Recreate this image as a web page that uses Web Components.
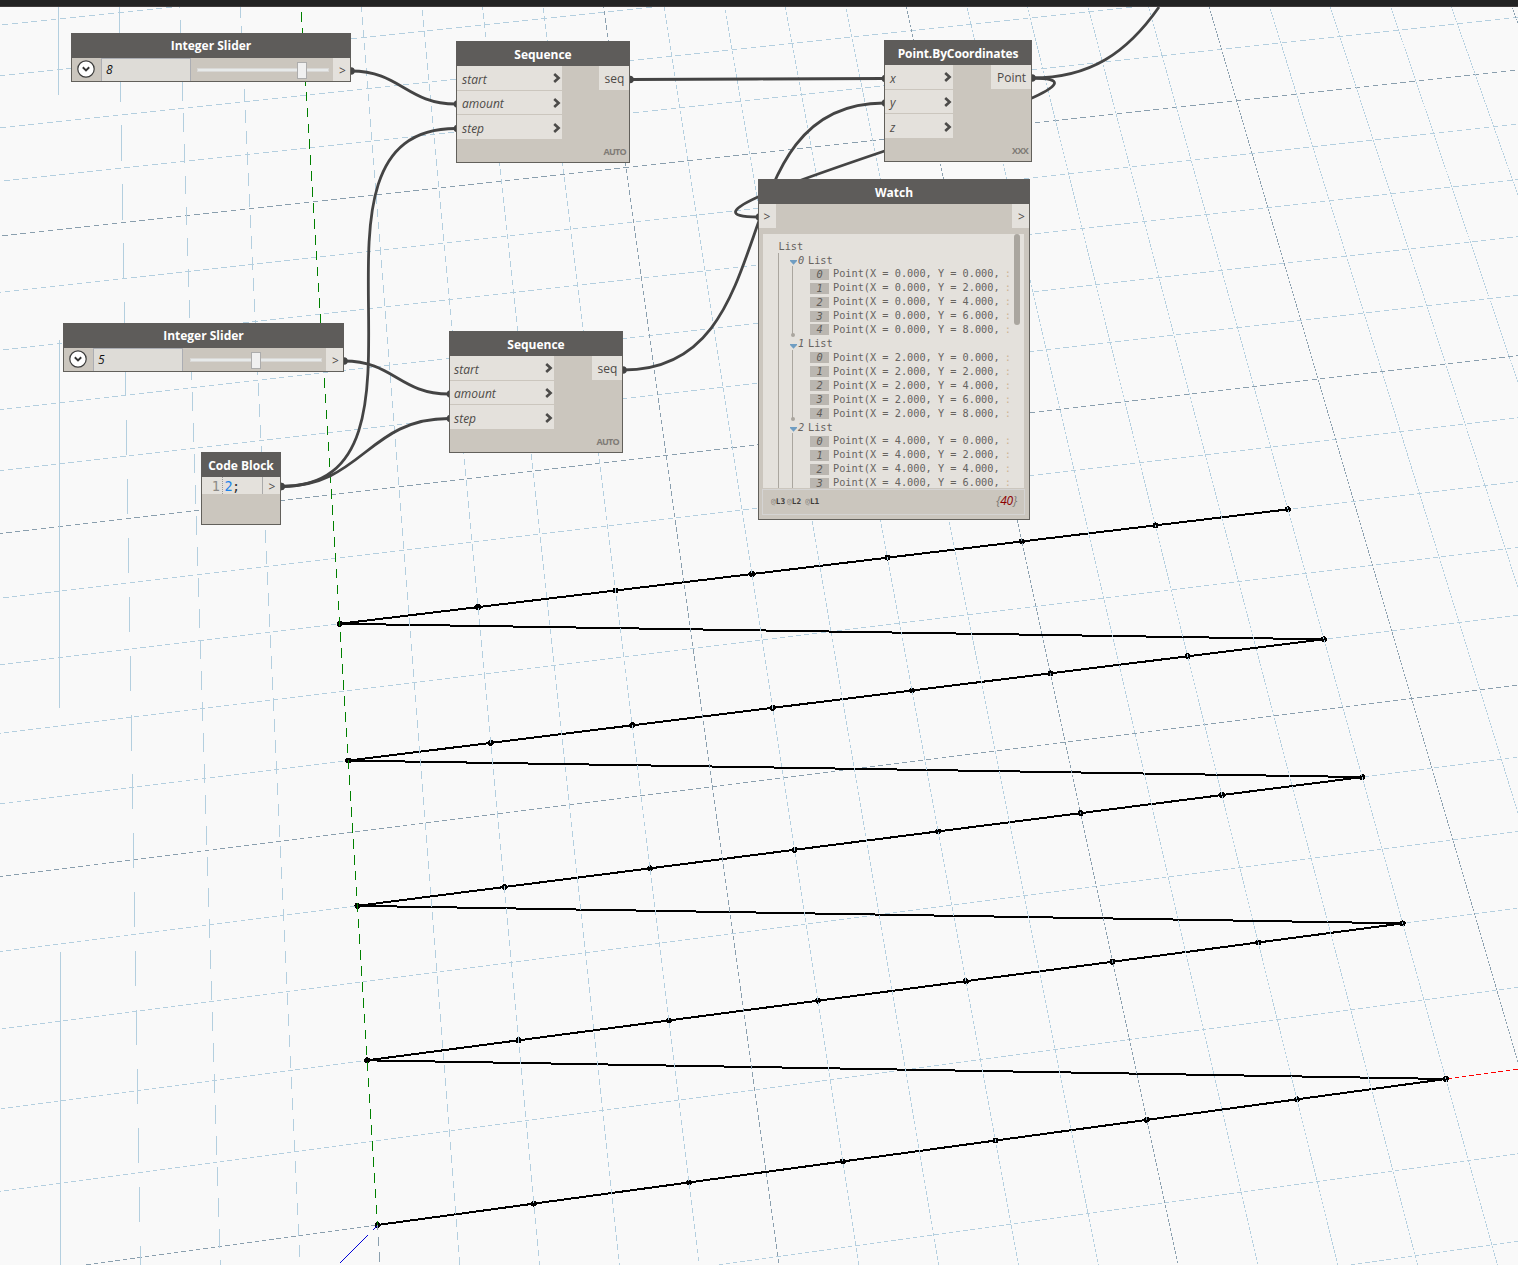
<!DOCTYPE html>
<html lang="en">
<head>
<meta charset="utf-8">
<title>Graph workspace</title>
<style>
html,body{margin:0;padding:0}
body{width:1518px;height:1265px;overflow:hidden;background:#f9f9f9;font-family:"Open Sans","Noto Sans",sans-serif;color:#4d4a47}
</style>
</head>
<body>
<graph-workspace>
  <graph-node heading="Integer Slider" style="left:71px;top:33px;width:280px;height:49px;--drop:0px">
    <int-slider value="8" style="--gap:6px;--pos:100px"></int-slider>
  </graph-node>
  <graph-node heading="Integer Slider" style="left:63px;top:323px;width:281px;height:49px;--drop:0px">
    <int-slider value="5" style="--gap:7px;--pos:61px"></int-slider>
  </graph-node>
  <graph-node heading="Sequence" tag="AUTO" style="left:456px;top:41px;width:174px;height:122px">
    <port-table inputs="start,amount,step" output="seq" style="--in:105px;--out:30px;--pad:5px"></port-table>
  </graph-node>
  <graph-node heading="Sequence" tag="AUTO" style="left:449px;top:331px;width:174px;height:122px">
    <port-table inputs="start,amount,step" output="seq" style="--in:104px;--out:30px;--pad:4px"></port-table>
  </graph-node>
  <graph-node heading="Point.ByCoordinates" tag="XXX" style="left:884px;top:40px;width:148px;height:122px;--track:-.1px">
    <port-table inputs="x,y,z" output="Point" style="--in:68px;--out:40px;--pad:5px"></port-table>
  </graph-node>
  <graph-node heading="Code Block" style="left:201px;top:452px;width:80px;height:73px">
    <code-line></code-line>
  </graph-node>
  <graph-node heading="Watch" style="left:758px;top:179px;width:272px;height:341px">
    <watch-panel></watch-panel>
  </graph-node>
</graph-workspace>

<script>
const define = (name, render) => customElements.define(name, class extends HTMLElement {
  connectedCallback() {
    if (!this.shadowRoot) this.attachShadow({ mode: 'open' }).innerHTML = render(this);
  }
});

/* Ground-plane projection: level horizon at y = -3947, columns meet at x = 52.19. */
const project = (X, Y) => {
  const w = 1 + 0.002075 * X + 0.016442 * Y;
  return [52.19 + (325.29 + 79.206 * X) / w, -3947 + 5172 / w];
};
/* A line drawn as a thin quad, so that it breaks into dashes when rasterised without smoothing. */
const bar = (a, b, width, fill) => {
  const dx = b[0] - a[0], dy = b[1] - a[1], l = Math.hypot(dx, dy);
  const nx = -dy / l * width / 2, ny = dx / l * width / 2;
  const p = [[a[0] + nx, a[1] + ny], [b[0] + nx, b[1] + ny], [b[0] - nx, b[1] - ny], [a[0] - nx, a[1] - ny]];
  return `<polygon fill="${fill}" points="${p.map(q => q.map(n => n.toFixed(3)).join()).join(' ')}"/>`;
};
const MINOR = '#b4cfdf', MAJOR = '#8a9fae';

define('ground-view', () => {
  let rows = '', cols = '', shape = '', dots = '';
  const T = 0.602;
  for (let y = -2; y <= 24; y++) {
    const c = y % 5 ? MINOR : MAJOR;
    if (y === 0) {
      rows += bar(project(-8, 0), project(0, 0), T, c) + bar(project(14, 0), project(20, 0), T, '#f00');
    } else rows += bar(project(-8, y), project(26, y), T, c);
  }
  for (let x = -5; x <= 24; x++) {
    const c = x % 5 ? MINOR : MAJOR;
    cols += bar(project(x, -3), project(x, x === 0 ? 0 : 26), T, c);
  }
  cols += bar(project(0, 0), project(0, 22.45), T, '#008000');
  let prev = null;
  for (let y = 0; y <= 8; y += 2) for (let x = 0; x <= 14; x += 2) {
    const p = project(x, y);
    if (prev) shape += bar(prev, p, 2, '#000');
    dots += `<circle cx="${p[0].toFixed(2)}" cy="${p[1].toFixed(2)}" r="2.95"/>`;
    prev = p;
  }
  const z = bar([339.5, 1263.5], [368, 1235.2], .9, '#0000d8') + bar([373, 1229.8], [377.5, 1225.5], .9, '#0000d8');
  return `<style>:host{display:block;width:100%;height:100%}svg{display:block}</style>
  <svg width="1518" height="1265" viewBox="0 0 1518 1265" shape-rendering="crispEdges">${rows}${shape}${dots}${cols}${z}</svg>`;
});

define('wire-layer', () => {
  const wires = [[351,71,456,104],[281,486.5,456,128.5],[344,361,449,394],[281,486.5,449,418.5],
    [630,79.5,884,78.5],[623,370,884,103],[1032,78,758,217]];
  let s = '';
  for (const [a, b, c, d] of wires) {
    const o = 0.45 * Math.hypot(c - a, d - b);
    s += `<path d="M${a} ${b}C${a + o} ${b} ${c - o} ${d} ${c} ${d}"/><circle cx="${a}" cy="${b}" r="3.8"/><circle cx="${c + 1.5}" cy="${d}" r="3.8"/>`;
  }
  s += '<path d="M1032 78C1090 78 1127 53 1159 7"/>';
  return `<style>:host{display:block;width:100%;height:100%}svg{display:block}path{fill:none;stroke:#444;stroke-width:2.8}circle{fill:#444}</style>
  <svg width="1518" height="1265" viewBox="0 0 1518 1265">${s}</svg>`;
});

define('graph-workspace', () => `<style>
  :host{display:block;position:relative;width:1518px;height:1265px;overflow:hidden;background:#f9f9f9}
  ground-view,wire-layer{position:absolute;left:0;top:0}
  .bar{position:relative;height:6px;background:#232323;border-bottom:1px solid #3f3b3b}
</style><ground-view></ground-view><wire-layer></wire-layer><div class="bar"></div><slot></slot>`);

define('graph-node', el => `<style>
  :host{display:flex;flex-direction:column;position:absolute;box-sizing:border-box;border:1px solid #62605b;border-top:0;background:#cbc6be}
  header{flex:none;box-sizing:border-box;height:25px;margin:0 -1px;padding-top:var(--drop,1px);background:#5e5c5a;color:#fff;font-weight:700;font-size:12px;line-height:25px;letter-spacing:var(--track,0px);text-align:center;white-space:nowrap}
  .body{flex:1;min-height:0;display:flex;flex-direction:column}
  footer{flex:none;height:21px;line-height:21px;padding-right:3px;text-align:right;font-size:9px;font-weight:700;letter-spacing:-.7px;color:#7f7b76}
</style><header>${el.getAttribute('heading')}</header><div class="body"><slot></slot></div>${el.hasAttribute('tag') ? `<footer>${el.getAttribute('tag')}</footer>` : ''}`);

define('int-slider', el => `<style>
  :host{display:flex;height:23px;align-items:stretch}
  .lead{flex:none;box-sizing:border-box;width:29px;padding-right:1px;display:flex;justify-content:center;align-items:center}
  .lead svg{display:block;margin-top:-1px}
  .box{flex:none;box-sizing:border-box;width:90px;border:1px solid #abadb3;border-bottom:0;background:#dedcd7;color:#111;font:italic 12px/22px "Open Sans",sans-serif;padding-left:4px}
  .rail{flex:none;width:132px;margin-left:var(--gap);display:flex;align-items:center;height:24px}
  .track{box-sizing:border-box;width:100%;height:4px;background:#e7eaea;border:1px solid #d9d8d6;display:flex;align-items:center}
  .thumb{flex:none;box-sizing:border-box;width:10px;height:17px;margin-left:calc(var(--pos) - 1px);background:#f0f0f0;border:1px solid #acacac}
  .out{flex:none;box-sizing:border-box;width:17px;padding-left:2px;margin-left:auto;background:#e4e1dc;font-size:12px;line-height:26px;text-align:center}
</style>
<div class="lead"><svg width="18" height="18" viewBox="0 0 18 18"><circle cx="9" cy="9" r="8.2" fill="#fff" stroke="#3c3c3c" stroke-width="1.2"/><path d="M5.8 7.3L9 10.4L12.2 7.3" fill="none" stroke="#333" stroke-width="1.9"/></svg></div>
<div class="box">${el.getAttribute('value')}</div>
<div class="rail"><div class="track"><div class="thumb"></div></div></div>
<div class="out">&gt;</div>`);

define('port-table', el => `<style>
  :host{display:flex;justify-content:space-between;align-items:flex-start;font-size:12px;line-height:25px}
  .ins{width:var(--in);display:flex;flex-direction:column;gap:1px}
  .in{display:flex;justify-content:space-between;align-items:center;height:23.67px;padding:1px 1px 0 var(--pad);box-sizing:border-box;background:#e4e1dc;font-style:italic}
  .in span{margin-top:1px}
  .in:first-child span{margin-top:2px}
  .out{box-sizing:border-box;width:var(--out);height:24px;padding-left:1px;background:#e4e1dc;text-align:center;line-height:26px}
  svg{display:block}
</style>
<div class="ins">${el.getAttribute('inputs').split(',').map(n => `<div class="in"><span>${n}</span><svg width="8" height="10" viewBox="0 0 8 10"><path d="M1.2 1L5.6 5L1.2 9" fill="none" stroke="#4c4b49" stroke-width="2.6"/></svg></div>`).join('')}</div>
<div class="out">${el.getAttribute('output')}</div>`);

define('code-line', () => `<style>
  :host{display:flex;height:17px;font:13.5px/19px "DejaVu Sans Mono",monospace}
  .ed{flex:none;width:61px;box-sizing:border-box;background:#e4e1dc;border-right:1px solid #aaa;display:flex}
  .n{width:21px;box-sizing:border-box;text-align:right;padding-right:2px;color:#8c8a86;border-right:1px dotted #999}
  .c{padding-left:1.5px;color:#333;letter-spacing:-.7px}b{font-weight:400;color:#1e84e8}
  .out{flex:1;background:#e4e1dc;font:12px/19px "Open Sans",sans-serif;text-align:center;padding-left:1px}
</style><div class="ed"><div class="n">1</div><div class="c"><b>2</b>;</div></div><div class="out">&gt;</div>`);

define('watch-list', el => {
  const i = +el.getAttribute('index'), n = +el.getAttribute('count');
  return `<style>
  :host{display:block}
  .head,.row{display:flex;align-items:center;height:13.93px;line-height:13.93px;white-space:pre}
  .head{padding-left:27px}
  .head b{font-weight:400;padding-top:1px}
  .tri{flex:none;width:7px;height:5px;margin-top:5px;display:block}
  i.k{width:11px;padding:1px 0 0 1px;box-sizing:border-box}
  .kids{margin-left:29px;position:relative}
  .kids:before{content:"";position:absolute;left:0;top:-1px;bottom:-1px;width:1px;background:#aaa69f}
  .kids.end:before{bottom:2px}
  .kids.end:after{content:"";position:absolute;left:-1.5px;bottom:-.5px;width:4px;height:4px;border-radius:2px;background:#aaa69f}
  .row{padding-left:18px}
  .row i{flex:none;width:19px;height:11px;line-height:11.5px;margin-right:4px;background:#bab6b0;text-align:center;color:#5f5c58}
  .row u{text-decoration:none;color:#cdb493;margin-left:-1px}
  </style>
  <div class="head"><svg class="tri" viewBox="0 0 7 5"><path d="M0 0H7V1L3.5 4.8L0 1Z" fill="#6f9dc2"/></svg><i class="k">${i}</i><b>List</b></div>
  <div class="kids ${n === 5 ? 'end' : ''}">${Array.from({ length: n }, (_, j) => `<div class="row"><i>${j}</i><span>Point(X = ${i * 2}.000, Y = ${j * 2}.000, <u>:</u></span></div>`).join('')}</div>`;
});

define('watch-panel', () => `<style>
  :host{display:flex;flex-direction:column;flex:1}
  .ports{display:flex;justify-content:space-between;height:24px;margin-bottom:6px;font-size:12px;line-height:26px;text-align:center}
  .ports span{box-sizing:border-box;width:17px;background:#e4e1dc}
  .ports span:first-child{padding-right:1px}.ports span:last-child{padding-left:2px}
  .list{display:flex;justify-content:space-between;height:254px;margin:0 5px 1px 4px;background:#e4e1dc;overflow:hidden;font:10.25px/13.93px "DejaVu Sans Mono",monospace;color:#66635f}
  .tree{width:247px;padding-top:5.5px;position:relative}
  .tree:before{content:"";position:absolute;left:15px;top:19px;height:235px;width:1px;background:#aaa69f}
  .root{padding-left:15.5px;height:13.93px}
  .thumb{width:6px;height:91px;margin-right:4px;border-radius:3px;background:#aaa69f}
  .foot{box-sizing:border-box;height:26px;margin:0 4px 0 3px;border:1px solid #d5d4d3;display:flex;align-items:center;justify-content:space-between;padding:0 7px 2px 8px}
  .lv{display:flex;gap:2px;padding-top:2px;font:bold 7.8px/10px "DejaVu Sans Mono",monospace;color:#3c3a38}
  .lv span:last-child{margin-left:2px}
  .lv em{font-style:normal;font-weight:400;color:#85817c}
  .cnt{font-size:12px;line-height:20px;font-style:italic;color:#7d7974;letter-spacing:-.2px}.cnt b{font-weight:400;color:#8b0000}
</style>
<div class="ports"><span>&gt;</span><span>&gt;</span></div>
<div class="list"><div class="tree"><div class="root">List</div>
<watch-list index="0" count="5"></watch-list><watch-list index="1" count="5"></watch-list><watch-list index="2" count="4"></watch-list></div><div class="thumb"></div></div>
<div class="foot"><div class="lv"><span><em>@</em>L3</span><span><em>@</em>L2</span><span><em>@</em>L1</span></div><div class="cnt">{<b>40</b>}</div></div>`);
</script>
</body>
</html>
